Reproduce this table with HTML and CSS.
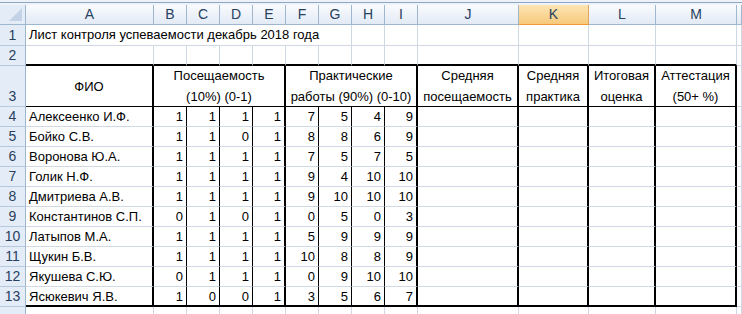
FILE: index.html
```html
<!DOCTYPE html>
<html lang="ru">
<head>
    <meta charset="UTF-8">
    <title>Лист контроля успеваемости</title>
    <link rel="stylesheet" href="styles.css">
</head>
<body>
    <div class="topbar"></div>
    <div class="grid" id="grid"></div>

    <script>
        const students = [
            ['Алексеенко И.Ф.', 1, 1, 1, 1, 7, 5, 4, 9],
            ['Бойко С.В.', 1, 1, 0, 1, 8, 8, 6, 9],
            ['Воронова Ю.А.', 1, 1, 1, 1, 7, 5, 7, 5],
            ['Голик Н.Ф.', 1, 1, 1, 1, 9, 4, 10, 10],
            ['Дмитриева А.В.', 1, 1, 1, 1, 9, 10, 10, 10],
            ['Константинов С.П.', 0, 1, 0, 1, 0, 5, 0, 3],
            ['Латыпов М.А.', 1, 1, 1, 1, 5, 9, 9, 9],
            ['Щукин Б.В.', 1, 1, 1, 1, 10, 8, 8, 9],
            ['Якушева С.Ю.', 0, 1, 1, 1, 0, 9, 10, 10],
            ['Ясюкевич Я.В.', 1, 0, 0, 1, 3, 5, 6, 7]
        ];
        const letters = ['A', 'B', 'C', 'D', 'E', 'F', 'G', 'H', 'I', 'J', 'K', 'L', 'M'];
        const grid = document.getElementById('grid');

        function cell(cls, html, span) {
            const d = document.createElement('div');
            d.className = 'c ' + (cls || '');
            if (html !== undefined) d.innerHTML = html;
            if (span) d.style.gridColumn = 'span ' + span;
            grid.appendChild(d);
            return d;
        }

        // column letters
        cell('corner');
        letters.forEach(l => cell(l === 'K' ? 'ch sel' : 'ch', l));
        cell('ch');

        // row 1: title runs over A..G
        cell('rh', '1');
        cell('txt', 'Лист контроля успеваемости декабрь 2018 года', 7);
        for (let i = 0; i < 6; i++) cell();
        cell();

        // row 2
        cell('rh', '2');
        letters.forEach(() => cell('tb'));
        cell();

        // row 3: table head
        cell('rh', '3');
        cell('head tr nb', 'ФИО');
        cell('head tr nb', 'Посещаемость<br>(10%) (0-1)', 4);
        cell('head tr nb', 'Практические<br>работы (90%) (0-10)', 4);
        cell('head tr nb', 'Средняя<br>посещаемость');
        cell('head tr nb', 'Средняя<br>практика');
        cell('head tr nb', 'Итоговая<br>оценка');
        cell('head tr nb', 'Аттестация<br>(50+ %)');
        cell();

        // rows 4..13
        const inner = ['nr', 'nr', 'nr', 'tr', 'nr', 'nr', 'nr', 'tr'];
        students.forEach((s, r) => {
            const last = r === students.length - 1 ? ' tb' : '';
            cell('rh', String(r + 4));
            cell('txt tr' + last, s[0]);
            for (let i = 1; i <= 8; i++) cell('num ' + inner[i - 1] + last, s[i]);
            for (let i = 0; i < 4; i++) cell('tr' + last);
            cell();
        });

        // next empty row, cut off by the window
        cell('rh');
        letters.forEach(() => cell());
        cell();
    </script>
</body>
</html>
```

FILE: styles.css
```css
body { margin: 0; overflow: hidden; background: #fff; font-family: "Liberation Sans", Arial, sans-serif; font-size: 13px; color: #000; }

.topbar { height: 5px; box-sizing: border-box; background: #e8eef6; border-top: 2px solid #edf2f8; border-bottom: 2px solid #eef3f9; position: relative; }
.topbar::before { content: ""; display: block; height: 1px; background: #8fa7c4; }

.grid {
    display: grid;
    grid-template-columns: 26px 128px repeat(8, 33px) 101px 70px 67px 81px 1fr;
    grid-template-rows: 20px 21px 20px 41px repeat(10, 20px) 20px;
}

.c { box-sizing: border-box; border-right: 1px solid #d0d7e5; border-bottom: 1px solid #d0d7e5; line-height: 19px; white-space: nowrap; overflow: hidden; }

/* headers */
.corner { background: #e4ecf7; border-right: 1px solid #9eb6ce; border-bottom: 1px solid #9eb6ce; position: relative; }
.corner::after { content: ""; position: absolute; right: 3px; bottom: 3px; border-left: 13px solid transparent; border-bottom: 13px solid #c3d2e6; }
.ch { background: linear-gradient(#f9fbfd, #e2eaf5); border-right: 1px solid #9eb6ce; border-bottom: 1px solid #9eb6ce; text-align: center; color: #27415f; font-size: 14px; }
.ch.sel { background: linear-gradient(#fde5b4, #f6c97c); border-bottom-color: #f29536; border-right-color: #e0a75c; }
.rh { background: #e4ecf7; border-right: 1px solid #9eb6ce; border-bottom: 1px solid #b5c8de; text-align: center; color: #27415f; font-size: 14px; display: flex; align-items: flex-end; justify-content: center; }

/* cells */
.txt { padding-left: 3px; }
.num { text-align: right; padding-right: 3px; }
.head { text-align: center; line-height: 21px; display: flex; align-items: center; justify-content: center; }

/* borders of the table */
.tr { border-right: 2px solid #000; }
.nr { border-right: 1px solid #000; }
.tb { border-bottom: 2px solid #000; }
.nb { border-bottom: 1px solid #000; }
```
